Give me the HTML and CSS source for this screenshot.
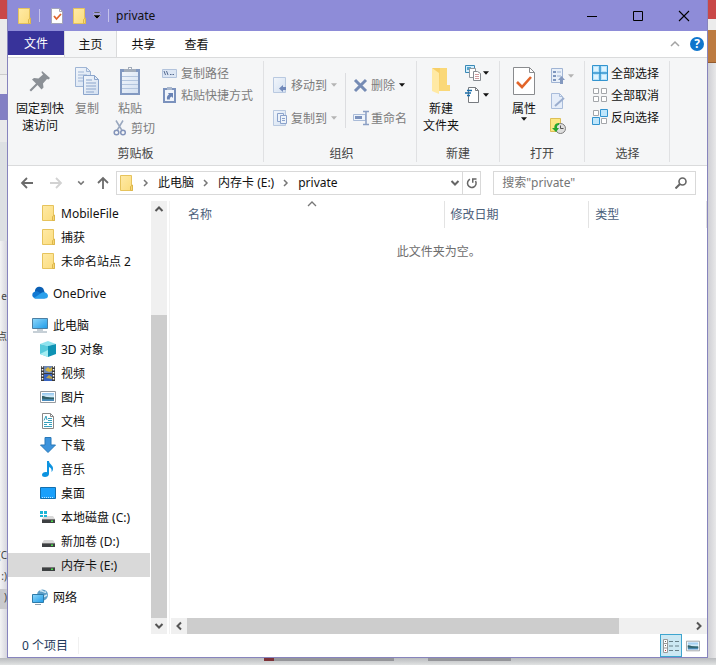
FILE: index.html
```html
<!DOCTYPE html>
<html lang="zh-CN">
<head>
<meta charset="utf-8">
<title>private</title>
<link rel="stylesheet" href="styles.css">
</head>
<body>
<svg class="defs" aria-hidden="true">
  <defs>
    <linearGradient id="gFolder" x1="0" y1="0" x2="1" y2="1"><stop offset="0" stop-color="#ffeaa6"/><stop offset="1" stop-color="#fbdc7c"/></linearGradient>
    <linearGradient id="gScreen" x1="0" y1="0" x2="1" y2="1"><stop offset="0" stop-color="#8fd8fb"/><stop offset="1" stop-color="#1e9be8"/></linearGradient>
    <linearGradient id="gPaper" x1="0" y1="0" x2="1" y2="1"><stop offset="0" stop-color="#f2f6fb"/><stop offset="1" stop-color="#d3e0f1"/></linearGradient>
    <linearGradient id="gPhoto" x1="0" y1="0" x2="0" y2="1"><stop offset="0" stop-color="#8fc4ef"/><stop offset=".45" stop-color="#d6ecf8"/><stop offset=".6" stop-color="#3f7a86"/><stop offset="1" stop-color="#4c8fc8"/></linearGradient>
  </defs>
  <symbol id="folder" viewBox="0 0 16 16"><path d="M2.500.500h11v10h1v5h-12z" fill="url(#gFolder)" stroke="#e6c35c"/><path d="M12.500 15.500v-4l2-1.500v5.500z" fill="#f8d775" stroke="#dcb64b"/></symbol>
  <symbol id="caret" viewBox="0 0 7 4"><path d="M0 0h7L3.500 4z" fill="currentColor"/></symbol>
  <symbol id="chev" viewBox="0 0 10 10"><path d="M1.500 3l3.500 3.500L8.500 3" fill="none" stroke="currentColor" stroke-width="2"/></symbol>
  <symbol id="thin" viewBox="0 0 10 10"><path d="M1 3l4 4 4-4" fill="none" stroke="currentColor" stroke-width="1.300"/></symbol>
  <symbol id="drive" viewBox="0 0 16 16"><path d="M4 7h9l2 3H2z" fill="#d9d9d9"/><path d="M2 10h13v4H2z" fill="#3d4042"/><path d="M2 10h13v1H2z" fill="#777"/><path d="M11 11.500h2v1.500h-2z" fill="#4be04b"/></symbol>
  <symbol id="photo" viewBox="0 0 16 16"><path d="M.5 2.500h15v11H.5z" fill="#fff" stroke="#969ba0"/><path d="M2 4h12v8H2z" fill="url(#gPhoto)"/><path d="M2 7c3 0 6 2 12 2v1C9 10 5 10 2 9.500z" fill="#315f68"/></symbol>
</svg>

<div class="desktop">
  <div class="behind behind-left" aria-hidden="true">
    <i class="red"></i><i class="pale"></i><i class="white"></i><i class="purple"></i><i class="grey"></i>
    <span class="mid">e</span><span class="mid">点</span><span class="low">(C</span><span>:)</span><span class="sel">)</span>
  </div>
  <div class="behind behind-right" aria-hidden="true"><i class="red"></i><i class="gap"></i><i class="brown"></i></div>
  <div class="behind behind-bottom" aria-hidden="true"><i class="lead"></i><i class="dot"></i><i class="bar"></i><i class="hole"></i><i class="tail"></i></div>

  <main class="window">
    <header class="title">
      <svg class="i16"><use href="#folder"/></svg>
      <i class="tsep"></i>
      <div class="quick">
        <button aria-label="属性"><svg class="i16" viewBox="0 0 16 16"><path d="M2.500.5h8l3 3v12h-11z" fill="#fff" stroke="#a5a5b8"/><path d="M10.500.5v3h3" fill="none" stroke="#a5a5b8"/><path d="M5 8l2.500 3L12 6" fill="none" stroke="#e0652d" stroke-width="1.800"/></svg></button>
        <button aria-label="新建文件夹"><svg class="i16"><use href="#folder"/></svg></button>
        <button aria-label="自定义快速访问工具栏"><svg class="qmore" viewBox="0 0 8 8"><path d="M1 0h6v1H1zM0 3h8L4 7z" fill="#000" stroke="#fff" stroke-width=".4"/></svg></button>
      </div>
      <i class="tsep"></i>
      <h1>private</h1>
      <div class="winbtns">
        <button aria-label="最小化"><svg viewBox="0 0 12 12"><path d="M1 6.500h10" stroke="#000"/></svg></button>
        <button aria-label="最大化"><svg viewBox="0 0 12 12"><path d="M1.500 1.500h9v9h-9z" stroke="#000" fill="none"/></svg></button>
        <button aria-label="关闭"><svg viewBox="0 0 12 12"><path d="M1 1l10 10M11 1L1 11" stroke="#000" stroke-width="1.100"/></svg></button>
      </div>
    </header>

    <nav class="tabs">
      <button class="file">文件</button><button class="on">主页</button><button>共享</button><button>查看</button>
      <div class="tabright">
        <button aria-label="最小化功能区"><svg class="i10" viewBox="0 0 10 10"><path d="M1 7l4-4 4 4" fill="none" stroke="#a3a3a3" stroke-width="1.500"/></svg></button>
        <button class="help" aria-label="帮助">?</button>
      </div>
    </nav>

    <section class="ribbon">
      <div class="group clip">
        <div class="tools">
          <button class="big wide"><span class="pic"><svg width="24" height="24" viewBox="0 0 24 24"><path d="M14 2l8 7-1.500 1.500-1.500-.5-4 4.500.5 4-2 2-4-4.500-6.500 6.500-1.500-1.500L8 14.500 4 10.500l2-1.500 4.500.5L15 5.500l-1.500-2z" fill="#8b9096"/></svg></span>固定到快<br>速访问</button>
          <button class="big off"><span class="pic"><svg width="26" height="30" viewBox="0 0 26 30"><path d="M1.500 1.500h11l4 4v15h-15z" fill="url(#gPaper)" stroke="#9fb5d5"/><path d="M12.500 1.500v4h4M4 6h6M4 9h9M4 12h9M4 15h9" fill="none" stroke="#9fb5d5"/><path d="M9.500 9.500h11l4 4v15h-15z" fill="url(#gPaper)" stroke="#8ba5cc"/><path d="M20.500 9.500v4h4M12 14h6M12 17h10M12 20h10M12 23h10M12 26h8" fill="none" stroke="#8ba5cc"/></svg></span>复制</button>
          <div class="pastecol">
            <button class="big off"><span class="pic"><svg width="20" height="30" viewBox="0 0 20 30"><path d="M0 3h20v26H0z" fill="#8299c1"/><path d="M2 6h16v21H2z" fill="url(#gPaper)"/><path d="M2 10.500h16M2 14.500h16M2 18.500h16M2 22.500h16" stroke="#b3c5de"/><path d="M4 3h4V1h4v2h4v3H4z" fill="#a3adbb"/><path d="M9 2h2v1H9z" fill="#fff"/></svg></span>粘贴</button>
            <button class="row off cut"><svg class="i16" viewBox="0 0 16 16"><path d="M4 .5l6 10M11 .5l-6 10" stroke="#9aa8bf" stroke-width="1.500"/><circle cx="4.500" cy="12.500" r="2.300" fill="none" stroke="#8394ba" stroke-width="1.500"/><circle cx="11" cy="12.500" r="2.300" fill="none" stroke="#8394ba" stroke-width="1.500"/></svg>剪切</button>
          </div>
          <div class="rows">
            <button class="row off"><svg class="i16" viewBox="0 0 16 16"><path d="M.5 4.500h14v8H.5z" fill="#dce6f4" stroke="#b2c3dc"/><path d="M2 6l1.500 4M4.500 6L6 10M8 9.500h1.500M10.500 9.500H12" fill="none" stroke="#54698f"/></svg>复制路径</button>
            <button class="row off"><svg class="i16" viewBox="0 0 16 16"><path d="M2 2h11v13H2z" fill="#f1f5fb" stroke="#7b92bd" stroke-width="2"/><path d="M5 0h5v3H5z" fill="#a9b7cd"/><path d="M5 12.500c-.5-3 .5-4 2-5L6 6h5v5L9.500 9.500C8 10.500 7.500 11 8 12.500z" fill="#6983b5"/></svg>粘贴快捷方式</button>
          </div>
        </div>
        <h2>剪贴板</h2>
      </div>

      <div class="group org">
        <div class="tools">
          <div class="spread">
            <button class="row off"><svg class="i16" viewBox="0 0 16 16"><path d="M.5.500h12v15H.500z" fill="url(#gPaper)" stroke="#b9c9e0"/><path d="M6 11.500l4-3.500v2h3v3h-3v2z" fill="#7189ba"/></svg>移动到<svg class="car dim"><use href="#caret"/></svg></button>
            <button class="row off"><svg class="i16" viewBox="0 0 16 16"><path d="M.5.500h12v15H.500z" fill="url(#gPaper)" stroke="#b9c9e0"/><path d="M4.500 3.500h6v8h-6z" fill="#edf3fa" stroke="#8ba2cb"/><path d="M7.500 5.500h6v8h-6zM9 8.500h3M9 10.500h3" fill="#edf3fa" stroke="#8ba2cb"/></svg>复制到<svg class="car dim"><use href="#caret"/></svg></button>
          </div>
          <i class="vsep"></i>
          <div class="spread">
            <button class="row off"><svg class="i16" viewBox="0 0 16 16"><path d="M2 3l11 11M13 3L2 14" stroke="#758bb4" stroke-width="3"/></svg>删除<svg class="car"><use href="#caret"/></svg></button>
            <button class="row off"><svg class="i16" viewBox="0 0 16 16"><path d="M.5 4.500h12v6H.5z" fill="#eef4fb" stroke="#a9bbd8"/><path d="M2 6h7v3H2z" fill="#7c92bd"/><path d="M10 1.500h6M10 14.500h6M13 1.500v13" fill="none" stroke="#8b9fc4" stroke-width="1.500"/></svg>重命名</button>
          </div>
        </div>
        <h2>组织</h2>
      </div>

      <div class="group new">
        <div class="tools">
          <button class="big"><span class="pic"><svg width="20" height="28" viewBox="0 0 20 28"><path d="M1 1h14v17h3v6H7z" fill="#f7cf68"/><path d="M9 1h7v17h3v6H8z" fill="#fad878"/><path d="M1 1l7 5v21l-7-3z" fill="#ffe9a4"/></svg></span>新建<br>文件夹</button>
          <div class="rows">
            <button class="row" aria-label="新建项目"><svg class="i16" viewBox="0 0 16 16"><path d="M.5.500h9v7h-9z" fill="#d3efff" stroke="#3989b5"/><path d="M2 2h4v3H2z" fill="#56a6ce"/><path d="M4.500 3.500h6v9h-6z" fill="#fff" stroke="#92979d"/><path d="M8.500 6.500h4l3 2v7h-7z" fill="#fff" stroke="#858a90"/><path d="M10 9.500h4M10 11.500h4M10 13.500h4" stroke="#cf9ca0"/></svg><svg class="car"><use href="#caret"/></svg></button>
            <button class="row" aria-label="轻松访问"><svg class="i16" viewBox="0 0 16 16"><path d="M3.500.5h7l3 3v12h-10z" fill="#fff" stroke="#777b80"/><path d="M10.500.5v3h3" fill="none" stroke="#777b80"/><path d="M2 3.500h5M0 6h6M2 8.500h3" stroke="#176ca9" stroke-width="1.500"/></svg><svg class="car"><use href="#caret"/></svg></button>
          </div>
        </div>
        <h2>新建</h2>
      </div>

      <div class="group open">
        <div class="tools">
          <button class="big"><span class="pic"><svg width="22" height="30" viewBox="0 0 22 30"><path d="M.5 1.500h16l5 5v22H.5z" fill="#fff" stroke="#898b8e"/><path d="M16.500 1.500v5h5" fill="none" stroke="#898b8e"/><path d="M4 16l5 5 9-10" fill="none" stroke="#e2652a" stroke-width="2.600"/></svg></span>属性<svg class="car"><use href="#caret"/></svg></button>
          <div class="stack">
            <button class="row" aria-label="打开"><svg class="i16" viewBox="0 0 16 16"><path d="M1.500.5h11v14h-11z" fill="#e9f0f9" stroke="#a0b4d4"/><path d="M3 3h3v2H3zM3 7h3v2H3zM3 11h3v2H3z" fill="#7f96be"/><path d="M7 4h4M7 8h4" stroke="#9bb0d2"/><path d="M8 12l3.500-4 3.500 4h-2v4h-3v-4z" fill="#8499bf"/></svg><svg class="car dim"><use href="#caret"/></svg></button>
            <button class="row" aria-label="编辑"><svg class="i16" viewBox="0 0 16 16"><path d="M1.500.5h8l3 3v12h-11z" fill="#e5edf9" stroke="#a9bcda"/><path d="M9.500.5v3h3" fill="none" stroke="#a9bcda"/><path d="M5 13l9-8" stroke="#9aadce" stroke-width="2"/></svg></button>
            <button class="row" aria-label="历史记录"><svg class="i16" viewBox="0 0 16 16"><path d="M.5.500h10v13H.5z" fill="#fce783" stroke="#ddbf56"/><circle cx="10.500" cy="10.500" r="5" fill="#dfdfdf" stroke="#7c7c7c"/><path d="M10.500 7.500v3h3" fill="none" stroke="#555"/><path d="M9 5C5 5 4 8 4.500 10H2l4 4 3-4H7c0-2 0-3 2-3z" fill="#27a52e"/></svg></button>
          </div>
        </div>
        <h2>打开</h2>
      </div>

      <div class="group select">
        <div class="tools">
          <div class="rows">
            <button class="row"><svg class="i16" viewBox="0 0 16 16"><path d="M.5.500h15v15H.5z" fill="#b9e4fb" stroke="#3394cf"/><path d="M8 0v16M0 8h16" stroke="#3394cf" stroke-width="1.500"/><path d="M2 2h4v4H2zM10 2h4v4h-4zM2 10h4v4H2zM10 10h4v4h-4z" fill="#dff4ff"/></svg>全部选择</button>
            <button class="row"><svg class="i16" viewBox="0 0 16 16"><path d="M1.500 1.500h5v5h-5zM9.500 1.500h5v5h-5zM1.500 9.500h5v5h-5zM9.500 9.500h5v5h-5z" fill="#fff" stroke="#a3a6aa"/></svg>全部取消</button>
            <button class="row"><svg class="i16" viewBox="0 0 16 16"><path d="M1.500 1.500h5v5h-5zM9.500 9.500h5v5h-5z" fill="#fff" stroke="#a3a6aa"/><path d="M8.500.500h7v7h-7zM.500 8.500h7v7h-7z" fill="#bfe6fb" stroke="#3394cf"/></svg>反向选择</button>
          </div>
        </div>
        <h2>选择</h2>
      </div>
    </section>

    <div class="address">
      <div class="navbtns">
        <button aria-label="返回"><svg class="i14" viewBox="0 0 14 14"><path d="M13 7H2M7 2L2 7l5 5" fill="none" stroke="#6b6b6b" stroke-width="1.800"/></svg></button>
        <button aria-label="前进"><svg class="i14" viewBox="0 0 14 14"><path d="M1 7h11M7 2l5 5-5 5" fill="none" stroke="#d2d2d2" stroke-width="1.800"/></svg></button>
        <button class="recent" aria-label="最近浏览的位置"><svg class="i8"><use href="#chev"/></svg></button>
        <button aria-label="上移"><svg class="i14" viewBox="0 0 14 14"><path d="M7 13V2M2 7l5-5 5 5" fill="none" stroke="#6b6b6b" stroke-width="1.800"/></svg></button>
      </div>
      <div class="path">
        <svg class="i16"><use href="#folder"/></svg>
        <svg class="crumb" viewBox="0 0 6 8"><path d="M1 1l3 3-3 3" fill="none" stroke="#777" stroke-width="1.500"/></svg><a href="#">此电脑</a>
        <svg class="crumb" viewBox="0 0 6 8"><path d="M1 1l3 3-3 3" fill="none" stroke="#777" stroke-width="1.500"/></svg><a href="#">内存卡 (E:)</a>
        <svg class="crumb" viewBox="0 0 6 8"><path d="M1 1l3 3-3 3" fill="none" stroke="#777" stroke-width="1.500"/></svg><a href="#">private</a>
        <button class="drop" aria-label="以前的位置"><svg class="i10"><use href="#chev"/></svg></button>
        <button class="refresh" aria-label="刷新"><svg class="i12" viewBox="0 0 12 12"><path d="M4 2.300A4.300 4.300 0 1 0 9.500 4" fill="none" stroke="#666" stroke-width="1.500"/><path d="M6 1.200h4.500v1.500H7.500v3H6z" fill="#666"/></svg></button>
      </div>
      <label class="search"><input type="text" aria-label="搜索" placeholder='搜索"private"'><svg class="i12" viewBox="0 0 12 12"><circle cx="7.500" cy="4.500" r="3.500" fill="none" stroke="#666" stroke-width="1.600"/><path d="M5 7L.5 11.500" stroke="#666" stroke-width="2"/></svg></label>
    </div>

    <div class="body">
      <nav class="tree">
        <ul class="sub">
          <li><a href="#"><svg class="i16"><use href="#folder"/></svg>MobileFile</a></li>
          <li><a href="#"><svg class="i16"><use href="#folder"/></svg>捕获</a></li>
          <li><a href="#"><svg class="i16"><use href="#folder"/></svg>未命名站点 2</a></li>
        </ul>
        <ul><li><a href="#"><svg class="i16" viewBox="0 0 16 16"><path d="M3 7a4.500 4.500 0 0 1 9-1.500l1 3-9 1z" fill="#0a5fb4"/><path d="M3 13.500A3.500 3.500 0 0 1 2.500 6.800c3-1.300 5 0 10.500 6.700z" fill="#1279d2"/><path d="M2 13l8-5.500c3-1 6 1 6 3.200 0 1.500-1 2.800-2.500 2.800H3.500z" fill="#2aa0ec"/></svg>OneDrive</a></li></ul>
        <ul><li><a href="#"><svg class="i16" viewBox="0 0 16 16"><path d="M.5 1.500h15v10H.5z" fill="url(#gScreen)" stroke="#4c7fa3"/><path d="M1 15h14M5 13h6" stroke="#8da0ae"/></svg>此电脑</a>
          <ul class="sub">
            <li><a href="#"><svg class="i16" viewBox="0 0 16 16"><path d="M0 3l8-3 8 3-8 2z" fill="#8fe3ee"/><path d="M0 3l8 2v11l-8-3z" fill="#58cbdc"/><path d="M8 5l8-2v10l-8 3z" fill="#0f93b4"/><path d="M0 13l8-4v7z" fill="#a6eef2"/></svg>3D 对象</a></li>
            <li><a href="#"><svg class="i16" viewBox="0 0 16 16"><path d="M1 1h14v15H1z" fill="#3b3b3b"/><path d="M4 1h8v7H4z" fill="#6d88b5"/><path d="M4 9h8v7H4z" fill="#3764c2"/><path d="M5 5l3-3 2 2 2-2v4l-3 1z" fill="#d4b33f"/><path d="M6 13l3-3 3 2v2z" fill="#b9a34d"/><path d="M2.500 1v15M13.500 1v15" stroke="#fff" stroke-width="1.500" stroke-dasharray="1.500 1.500"/></svg>视频</a></li>
            <li><a href="#"><svg class="i16"><use href="#photo"/></svg>图片</a></li>
            <li><a href="#"><svg class="i16" viewBox="0 0 16 16"><path d="M2.500.500h8l3 3v12h-11z" fill="#fff" stroke="#888"/><path d="M10.500.500v3h3" fill="none" stroke="#888"/><path d="M8 5.500h4M8 7.500h4M4 9.500h8M4 11.500h3M9 11.500h3M4 13.500h8M4 7.500L6 3l1 4" fill="none" stroke="#37a0bd"/></svg>文档</a></li>
            <li><a href="#"><svg class="i16" viewBox="0 0 16 16"><path d="M5 .5h6V8h4.500L8 15.500.500 8H5z" fill="#3c93dc" stroke="#2878b8"/></svg>下载</a></li>
            <li><a href="#"><svg class="i16" viewBox="0 0 16 16"><path d="M7 0h2c0 3 4 4 4 7.500 0 1.500-.5 2.500-1.500 3.500.5-3-.5-4-2.500-5v7c0 2-2 3-4 3s-3-1-3-2.300C2 12 4.500 10.500 7 11.200z" fill="#0d93e0"/></svg>音乐</a></li>
            <li><a href="#"><svg class="i16" viewBox="0 0 16 16"><path d="M.5 2.500h15v11H.5z" fill="#1aa0fb" stroke="#136fae"/><path d="M2 12.500h12" stroke="#bce6ff" stroke-dasharray="1 1"/></svg>桌面</a></li>
            <li><a href="#"><svg class="i16" viewBox="0 0 16 16"><use href="#drive"/><path d="M0 2h3v3H0zM4 2h3v3H4zM0 6h3v2H0zM4 6h3v2H4z" fill="#1bb6d6"/></svg>本地磁盘 (C:)</a></li>
            <li><a href="#"><svg class="i16"><use href="#drive"/></svg>新加卷 (D:)</a></li>
            <li class="current"><a href="#"><svg class="i16"><use href="#drive"/></svg>内存卡 (E:)</a></li>
          </ul></li></ul>
        <ul><li><a href="#"><svg class="i16" viewBox="0 0 16 16"><circle cx="10.500" cy="6" r="5.500" fill="#5d9fc8"/><path d="M8 2c3-1 3 2 6 1M11 8l4-2" stroke="#cfe8f5" stroke-width="1.500" fill="none"/><path d="M.5 5.500h11v8H.5z" fill="url(#gScreen)" stroke="#2d7ba9"/><path d="M3 15.500h6" stroke="#8da0ae"/></svg>网络</a></li></ul>
      </nav>
      <div class="vbar" aria-hidden="true">
        <span><svg class="i10 flip"><use href="#chev"/></svg></span><i class="rest"></i><i class="thumb"></i><span><svg class="i10"><use href="#chev"/></svg></span>
      </div>
      <section class="files">
        <table>
          <thead><tr><th class="name">名称<svg class="i10 flip sort"><use href="#thin"/></svg></th><th class="date">修改日期</th><th class="type">类型</th></tr></thead>
          <tbody><tr><td colspan="3">此文件夹为空。</td></tr></tbody>
        </table>
        <div class="hbar" aria-hidden="true">
          <span><svg class="i10 left"><use href="#chev"/></svg></span><i class="thumb"></i><i class="rest"></i><span><svg class="i10 right"><use href="#chev"/></svg></span>
        </div>
      </section>
    </div>

    <footer class="status">
      <p>0 个项目</p>
      <div class="views">
        <button class="on" aria-label="详细信息"><svg class="i16" viewBox="0 0 16 16"><path d="M.5 1.500h4v13h-4zM.5 5.500h4M.5 10h4" fill="#fff" stroke="#999"/><path d="M2 3h1v1H2zM2 7h1v1H2z" fill="#666"/><path d="M2 12h1v1H2z" fill="#c33"/><path d="M6 3.500h4M12 3.500h4M6 8h4M12 8h4M6 12.500h4M12 12.500h4" stroke="#688089"/></svg></button>
        <button aria-label="大缩略图"><svg class="i14"><use href="#photo"/></svg></button>
      </div>
    </footer>
  </main>
</div>
</body>
</html>
```
FILE: styles.css
```css
* { box-sizing: border-box; }
body, h1, h2, p, ul { margin: 0; padding: 0; font-size: 12px; font-weight: 400; }
body { font-family: "Noto Sans", "Noto Sans CJK SC", sans-serif; line-height: 17px; color: #111; }
button, input { font: inherit; color: inherit; border: 0; padding: 0; background: none; }
a { color: inherit; text-decoration: none; }
ul { list-style: none; }
svg { display: block; flex: none; }
i { display: block; flex: none; }
.defs { position: absolute; width: 0; height: 0; }
.i16 { width: 16px; height: 16px; }
.i14 { width: 14px; height: 14px; }
.i12 { width: 12px; height: 12px; }
.i10 { width: 10px; height: 10px; }
.i8 { width: 8px; height: 8px; }
.car { width: 6px; height: 4px; color: #111; }
.dim { color: #b4b4b4; }
.flip { transform: rotate(180deg); }
.left { transform: rotate(90deg); }
.right { transform: rotate(-90deg); }

/* windows behind the active one */
.desktop { position: relative; height: 100vh; padding: 0 8px 7px 7px; background: #e3e4e5; overflow: hidden; }
.behind { position: absolute; display: flex; flex-direction: column; overflow: hidden; color: #444; }
.behind-left { left: 0; top: 0; bottom: 7px; width: 7px; background: linear-gradient(90deg, #f3f3f4, #d6d6de); }
.behind-left .pale { height: 56px; background: #ebebeb; border-bottom: 1px solid #ccc; }
.behind-left .white { height: 19px; background: #efefef; }
.behind-left .purple { height: 26px; background: #8380c4; }
.behind-left .grey { height: 121px; border-top: 22px solid #e9e9ea; background: #dde0e3; }
.behind-left span { display: flex; justify-content: flex-end; height: 20px; white-space: nowrap; margin-bottom: 1px; font-size: 10px; }
.behind-left .mid { height: 40px; margin: 0; align-items: flex-end; }
.behind-left .mid:first-of-type { height: 64px; }
.behind-left .low { margin-top: 202px; }
.behind-left .sel { background: #c9c9cd; }
.red { height: 19px; background: #c94747; }
.behind-right { right: 0; top: 0; bottom: 0; width: 8px; background: linear-gradient(90deg, #cfcfd4, #e8e8e9); }
.behind-right .gap { height: 11px; background: #ececec; }
.behind-right .brown { height: 33px; background: #bd7b41; border-bottom: 1px solid #945b2e; }
.behind-bottom { left: 0; right: 0; bottom: 0; height: 7px; flex-direction: row; background: linear-gradient(#b9bbbe, #e1e3e3); }
.behind-bottom i { height: 3px; }
.behind-bottom .lead { width: 264px; }
.behind-bottom .dot { width: 10px; background: #7d3238; }
.behind-bottom .bar { width: 120px; background: #95969a; }
.behind-bottom .hole { width: 34px; }
.behind-bottom .tail { width: 83px; background: #95969a; }

.window { position: relative; height: 100%; display: flex; flex-direction: column; background: #fff; border: 1px solid #8784bd; border-top: 0; }

.title { display: flex; align-items: center; height: 31px; flex: none; padding-left: 8px; background: #8e8cd8; }
.tsep { width: 1px; height: 13px; margin: 0 7px; background: #c5c3ec; }
.quick { display: flex; align-items: center; gap: 6px; padding-left: 2px; }
.qmore { width: 8px; height: 8px; }
.winbtns { display: flex; margin-left: auto; }
.winbtns button { width: 46px; height: 31px; display: grid; place-items: center; }
.winbtns svg { width: 12px; height: 12px; }

.tabs { display: flex; flex: none; height: 26px; }
.tabs > button { width: 53px; }
.tabs .file { width: 56px; height: 24px; background: #38339a; color: #fff; }
.tabs .on { background: #f5f6f7; border: 1px solid #dadbdc; border-top: 0; border-bottom: 0; }
.tabright { display: flex; align-items: center; gap: 10px; margin-left: auto; padding-right: 3px; }
.help { width: 14px; height: 14px; border-radius: 50%; background: #0f75cc; color: #fff; font-weight: 700; line-height: 14px; }

.ribbon { display: flex; flex: none; height: 109px; padding: 3px 0; background: #f5f6f7; border-top: 1px solid #dadbdc; border-bottom: 1px solid #dadbdc; }
.group { display: flex; flex-direction: column; justify-content: space-between; padding: 1px 6px 0; border-right: 1px solid #e0e1e3; }
.group h2 { text-align: center; color: #444; }
.tools { display: flex; }
.big { display: flex; flex-direction: column; align-items: center; width: 48px; }
.big.wide { width: 52px; }
.pic { display: grid; place-items: center; height: 38px; }
.off { color: #7c7c7c; }
.row { display: flex; align-items: center; gap: 3px; height: 22px; white-space: nowrap; }
.clip { width: 256px; }
.clip .tools > .off { width: 42px; }
.pastecol { display: flex; flex-direction: column; width: 48px; margin-left: 4px; }
.pastecol .big { width: 36px; height: 56px; }
.cut { height: 20px; }
.clip .rows { padding-left: 2px; }
.org { width: 153px; padding-left: 9px; }
.spread { display: flex; flex-direction: column; gap: 11px; padding-top: 12px; }
.spread .row { gap: 2px; }
.spread .car { margin-left: 2px; }
.vsep { width: 1px; height: 55px; margin: 11px 7px 0 8px; background: #dcdde0; }
.new { width: 83px; padding: 1px 0 0; }
.new .row { gap: 2px; }
.open { width: 85px; padding: 1px 0 0; }
.stack { padding: 1px 0 0 2px; }
.stack .row { height: 25px; gap: 2px; }
.select { width: 85px; padding-left: 7px; }

.address { display: flex; align-items: center; flex: none; height: 35px; padding: 0 11px 2px 12px; gap: 12px; }
.navbtns { display: flex; align-items: center; gap: 15px; margin-right: -6px; }
.navbtns .recent { margin: 0 -4px 0 -1px; }
.navbtns svg { color: #777; }
.path { display: flex; align-items: center; flex: 1; height: 24px; padding-left: 1px; gap: 9px; border: 1px solid #d9d9d9; white-space: nowrap; }
.crumb { width: 6px; height: 8px; }
.path button { display: grid; place-items: center; height: 22px; color: #666; }
.path .drop { margin-left: auto; }
.path .refresh { width: 18px; margin-left: -7px; border-left: 1px solid #d9d9d9; }
.search { display: flex; align-items: center; width: 30%; height: 24px; padding: 0 8px; border: 1px solid #d9d9d9; }
.search input { flex: 1; min-width: 0; outline: 0; }
.search input::placeholder { color: #757575; opacity: 1; }

.body { display: flex; flex: 1; min-height: 0; }
.tree { width: 143px; flex: none; overflow: hidden; }
.tree > ul { margin-bottom: 8px; }
.tree a { display: flex; align-items: center; gap: 5px; height: 24px; padding-left: 24px; white-space: nowrap; }
.tree .sub a { padding-left: 32px; }
.current { background: #d9d9d9; margin-right: 1px; }
.vbar { display: flex; flex-direction: column; width: 16px; flex: none; background: #f0f0f0; color: #555; }
.vbar span, .hbar span { display: grid; place-items: center; width: 16px; height: 16px; flex: none; }
.vbar .rest { flex: 98; }
.vbar .thumb { flex: 302; background: #cdcdcd; }
.files { display: flex; flex-direction: column; justify-content: space-between; flex: 1; margin-left: 2px; border-left: 1px solid #f2f2f2; padding-left: 1px; }
.files table { width: 100%; border-collapse: collapse; table-layout: fixed; }
.files th { position: relative; height: 27px; padding: 0 0 0 6px; text-align: left; font-weight: 400; color: #4c607a; border-right: 1px solid #e3e3e3; }
.files .name { width: 51%; padding-left: 17px; }
.files .date { width: 27%; }
.sort { position: absolute; left: 50%; top: -2px; color: #777; }
.files td { padding: 15px 4px; text-align: center; color: #6d6d6d; }
.hbar { display: flex; height: 16px; background: #f0f0f0; color: #555; }
.hbar .thumb { flex: 431; background: #cdcdcd; }
.hbar .rest { flex: 72; }

.status { display: flex; flex: none; height: 23px; padding-left: 14px; color: #1e395b; }
.status p { align-self: center; padding-right: 10px; border-right: 1px solid #f0f0f0; }
.views { display: flex; margin-left: auto; padding-right: 3px; }
.views button { display: grid; place-items: center; width: 22px; }
.views .on { background: #cce8f3; border: 1px solid #3da5cf; }
```
